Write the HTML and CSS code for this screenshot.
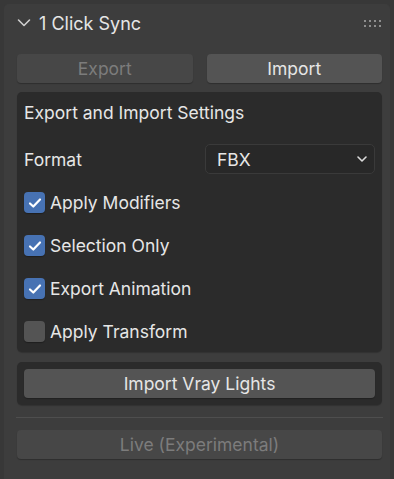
FILE: index.html
```html
<!DOCTYPE html>
<html lang="en">
<head>
    <meta charset="UTF-8">
    <title>1 Click Sync</title>
    <link rel="stylesheet" href="styles.css">
</head>
<body>

    <!-- Sidebar panel -->
    <div class="panel">
        <div class="panel-header">
            <svg class="chevron" width="14" height="10" viewBox="0 0 14 10">
                <path d="M1.5 2 L7 7.5 L12.5 2" fill="none" stroke="#cfcfcf" stroke-width="1.6" stroke-linecap="round" stroke-linejoin="round"/>
            </svg>
            <span class="panel-title">1 Click Sync</span>
            <div class="grip">
                <span></span><span></span><span></span><span></span>
                <span></span><span></span><span></span><span></span>
            </div>
        </div>

        <div class="button-row">
            <button class="btn disabled">Export</button>
            <button class="btn">Import</button>
        </div>

        <!-- Settings box -->
        <div class="box settings">
            <div class="box-title">Export and Import Settings</div>

            <div class="prop-row">
                <span class="prop-label">Format</span>
                <div class="dropdown">
                    <span>FBX</span>
                    <svg width="12" height="8" viewBox="0 0 12 8">
                        <path d="M2 2 L6 6 L10 2" fill="none" stroke="#dcdcdc" stroke-width="1.6" stroke-linecap="round" stroke-linejoin="round"/>
                    </svg>
                </div>
            </div>

            <label class="check-row">
                <span class="check on"><svg width="14" height="12" viewBox="0 0 14 12"><path d="M2 6.5 L5.3 9.5 L12 2.5" fill="none" stroke="#fff" stroke-width="2.2" stroke-linecap="round" stroke-linejoin="round"/></svg></span>
                <span>Apply Modifiers</span>
            </label>
            <label class="check-row">
                <span class="check on"><svg width="14" height="12" viewBox="0 0 14 12"><path d="M2 6.5 L5.3 9.5 L12 2.5" fill="none" stroke="#fff" stroke-width="2.2" stroke-linecap="round" stroke-linejoin="round"/></svg></span>
                <span>Selection Only</span>
            </label>
            <label class="check-row">
                <span class="check on"><svg width="14" height="12" viewBox="0 0 14 12"><path d="M2 6.5 L5.3 9.5 L12 2.5" fill="none" stroke="#fff" stroke-width="2.2" stroke-linecap="round" stroke-linejoin="round"/></svg></span>
                <span>Export Animation</span>
            </label>
            <label class="check-row">
                <span class="check"></span>
                <span>Apply Transform</span>
            </label>
        </div>

        <!-- Vray box -->
        <div class="box vray">
            <button class="btn wide">Import Vray Lights</button>
        </div>

        <div class="separator"></div>

        <button class="btn disabled wide">Live (Experimental)</button>
    </div>

</body>
</html>
```

FILE: styles.css
```css
* {
    margin: 0;
    padding: 0;
    box-sizing: border-box;
}

body {
    font-family: 'Inter', 'Noto Sans', sans-serif;
    background-color: #383838;
    color: #e6e6e6;
    font-size: 17.5px;
    padding: 4px 4px 0 4px;
    height: 479px;
    overflow: hidden;
}

/* Panel */
.panel {
    background-color: #3d3d3d;
    border-radius: 5px 5px 0 0;
    padding: 0 8px 20px 13px;
    height: 475px;
}

.panel-header {
    display: flex;
    align-items: center;
    height: 38px;
}

.chevron {
    margin-right: 8px;
}

.panel-title {
    font-size: 18px;
    color: #e6e6e6;
    flex: 1;
}

.grip {
    display: grid;
    grid-template-columns: repeat(4, 2px);
    gap: 3px;
    margin-right: 1px;
}

.grip span {
    width: 2px;
    height: 2px;
    background-color: #8e8e8e;
}

/* Buttons */
.button-row {
    display: flex;
    gap: 14px;
    margin-top: 12px;
}

.btn {
    flex: 1;
    height: 29px;
    border: none;
    border-radius: 4px;
    background-color: #545454;
    color: #e6e6e6;
    font-family: inherit;
    font-size: 17.5px;
    box-shadow: 0 1px 1px rgba(0, 0, 0, 0.25);
}

.btn.disabled {
    background-color: #474747;
    color: #7c7c7c;
}

.btn.wide {
    width: 100%;
    display: block;
}

/* Boxes */
.box {
    background-color: #2b2b2b;
    border-radius: 5px;
    box-shadow: 0 1px 1px rgba(0, 0, 0, 0.2);
}

.settings {
    margin-top: 9px;
    padding: 8px 7px 8px 7px;
    height: 260px;
}

.box-title {
    height: 26px;
    line-height: 26px;
    margin-bottom: 18px;
}

.prop-row {
    display: flex;
    align-items: center;
    justify-content: space-between;
    height: 30px;
}

.dropdown {
    width: 170px;
    height: 30px;
    border: 1px solid #3a3a3a;
    border-radius: 5px;
    background-color: #282828;
    display: flex;
    align-items: center;
    justify-content: space-between;
    padding: 0 6px 0 11px;
}

.check-row {
    display: flex;
    align-items: center;
    gap: 5px;
    height: 21px;
    margin-top: 22px;
}

.prop-row + .check-row {
    margin-top: 18px;
}

.check {
    width: 21px;
    height: 21px;
    border-radius: 4px;
    background-color: #545454;
    display: flex;
    align-items: center;
    justify-content: center;
    box-shadow: 0 1px 1px rgba(0, 0, 0, 0.3);
}

.check.on {
    background-color: #4772b3;
}

.vray {
    margin-top: 10px;
    padding: 7px;
}

.separator {
    height: 1px;
    background-color: #4e4e4e;
    margin: 12px -1px 12px -1px;
}
```
